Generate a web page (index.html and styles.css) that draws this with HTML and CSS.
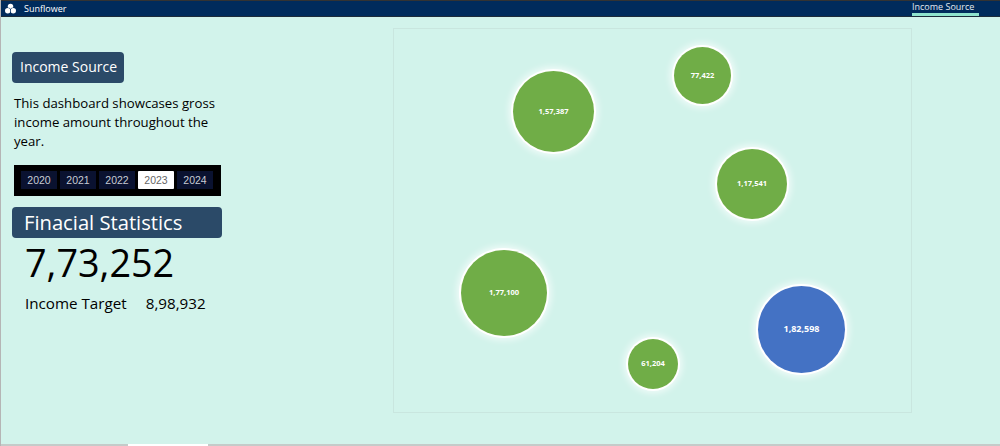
FILE: index.html
```html
<!DOCTYPE html>
<html lang="en">
<head>
<meta charset="utf-8">
<title>Sunflower</title>
<link rel="stylesheet" href="styles.css">
</head>
<body>
<div class="app">
  <header class="topbar">
    <div class="brand">
      <svg class="logo" viewBox="0 0 12 12" aria-hidden="true">
        <circle cx="6" cy="3.2" r="3" fill="#fff"/>
        <circle cx="3" cy="8" r="3" fill="#fff"/>
        <circle cx="9" cy="8" r="3" fill="#fff"/>
        <path d="M6 6v5.5M6 6 3.8 4.6M6 6l2.2-1.4" stroke="#002b5c" stroke-width=".7" fill="none"/>
      </svg>
      <span>Sunflower</span>
    </div>
    <nav class="tab">Income Source</nav>
  </header>
  <main class="content">
    <aside class="side">
      <h1 class="title-chip">Income Source</h1>
      <p class="desc">This dashboard showcases gross income amount throughout the year.</p>
      <div class="years">
        <span class="year">2020</span>
        <span class="year">2021</span>
        <span class="year">2022</span>
        <span class="year active">2023</span>
        <span class="year">2024</span>
      </div>
      <h2 class="stats-head">Finacial Statistics</h2>
      <div class="big">7,73,252</div>
      <div class="target"><span>Income Target</span><span>8,98,932</span></div>
    </aside>
    <section class="chart">
      <div class="bubble green" style="left:119px;top:42px;width:81px;height:81px">1,57,387</div>
      <div class="bubble green small" style="left:280px;top:18px;width:57px;height:57px">77,422</div>
      <div class="bubble green small" style="left:323px;top:120px;width:70px;height:70px">1,17,541</div>
      <div class="bubble green" style="left:67px;top:221px;width:86px;height:86px">1,77,100</div>
      <div class="bubble blue" style="left:364px;top:257px;width:87px;height:87px">1,82,598</div>
      <div class="bubble green small" style="left:234px;top:310px;width:50px;height:50px">61,204</div>
    </section>
  </main>
  <div class="footbar"><span class="page"></span></div>
</div>
</body>
</html>
```
FILE: styles.css
```css
* { box-sizing: border-box; margin: 0; padding: 0; }
html, body { width: 1000px; height: 446px; overflow: hidden; }
body { font-family: "Open Sans", "Noto Sans", sans-serif; background: #d2f3eb; color: #000; }
.app { width: 1000px; height: 446px; display: flex; flex-direction: column; border-left: 1px solid #b5b5b5; }
.topbar { height: 17px; flex: none; display: flex; justify-content: space-between; background: #002b5c; border-top: 1px solid #333; border-bottom: 1px solid #1c2b3a; color: #fff; font-size: 9px; }
.brand { display: flex; align-items: center; gap: 8px; padding-left: 4px; }
.logo { width: 11px; height: 12px; }
.tab { width: 67px; margin-right: 21px; height: 15px; line-height: 12px; text-align: left; white-space: nowrap; color: #e4e9ef; border-bottom: 3px solid #8fe3cd; }
.content { flex: 1; display: flex; min-height: 0; }
.side { width: 392px; flex: none; padding: 35px 0 0 11px; }
.title-chip { width: 112px; height: 31px; line-height: 30px; padding-left: 8px; font-size: 14px; font-weight: 400; color: #fff; background: #2b4a68; border-radius: 4px; }
.desc { width: 210px; margin: 11px 0 0 2px; font-size: 13.2px; line-height: 19px; }
.years { width: 207px; height: 31px; margin: 14px 0 0 2px; padding: 6px 7px; display: flex; gap: 3px; background: #000; }
.year { flex: none; width: 36px; height: 18px; line-height: 18px; text-align: center; font-family: "Liberation Sans", sans-serif; font-size: 10.5px; color: #c8ccd4; background: #0a1230; }
.year.active { background: #fff; color: #666; border-radius: 1px; }
.stats-head { width: 210px; height: 31px; margin-top: 11px; padding-left: 12px; line-height: 30px; font-size: 20.2px; font-weight: 400; color: #fff; background: #2b4a68; border-radius: 4px; }
.big { margin: 1px 0 0 13px; font-size: 37.8px; line-height: 48px; color: #000; }
.target { display: flex; gap: 19px; margin: 6px 0 0 13px; font-size: 15.2px; line-height: 20px; }
.chart { position: relative; width: 519px; height: 385px; margin-top: 11px; border: 1px solid #c9e6df; }
.bubble { position: absolute; display: flex; align-items: center; justify-content: center; padding-bottom: 2px; border-radius: 50%; color: #fff; font-size: 7.5px; font-weight: 700; box-shadow: 0 0 0 2px #fff, 0 0 7px 4px rgba(255,255,255,.7); }
.green { background: #70ad47; }
.blue { background: #4472c4; font-size: 9px; }
.footbar { height: 2px; flex: none; background: #c4cbc9; padding-left: 127px; }
.page { display: block; width: 80px; height: 2px; background: #fff; }
```
